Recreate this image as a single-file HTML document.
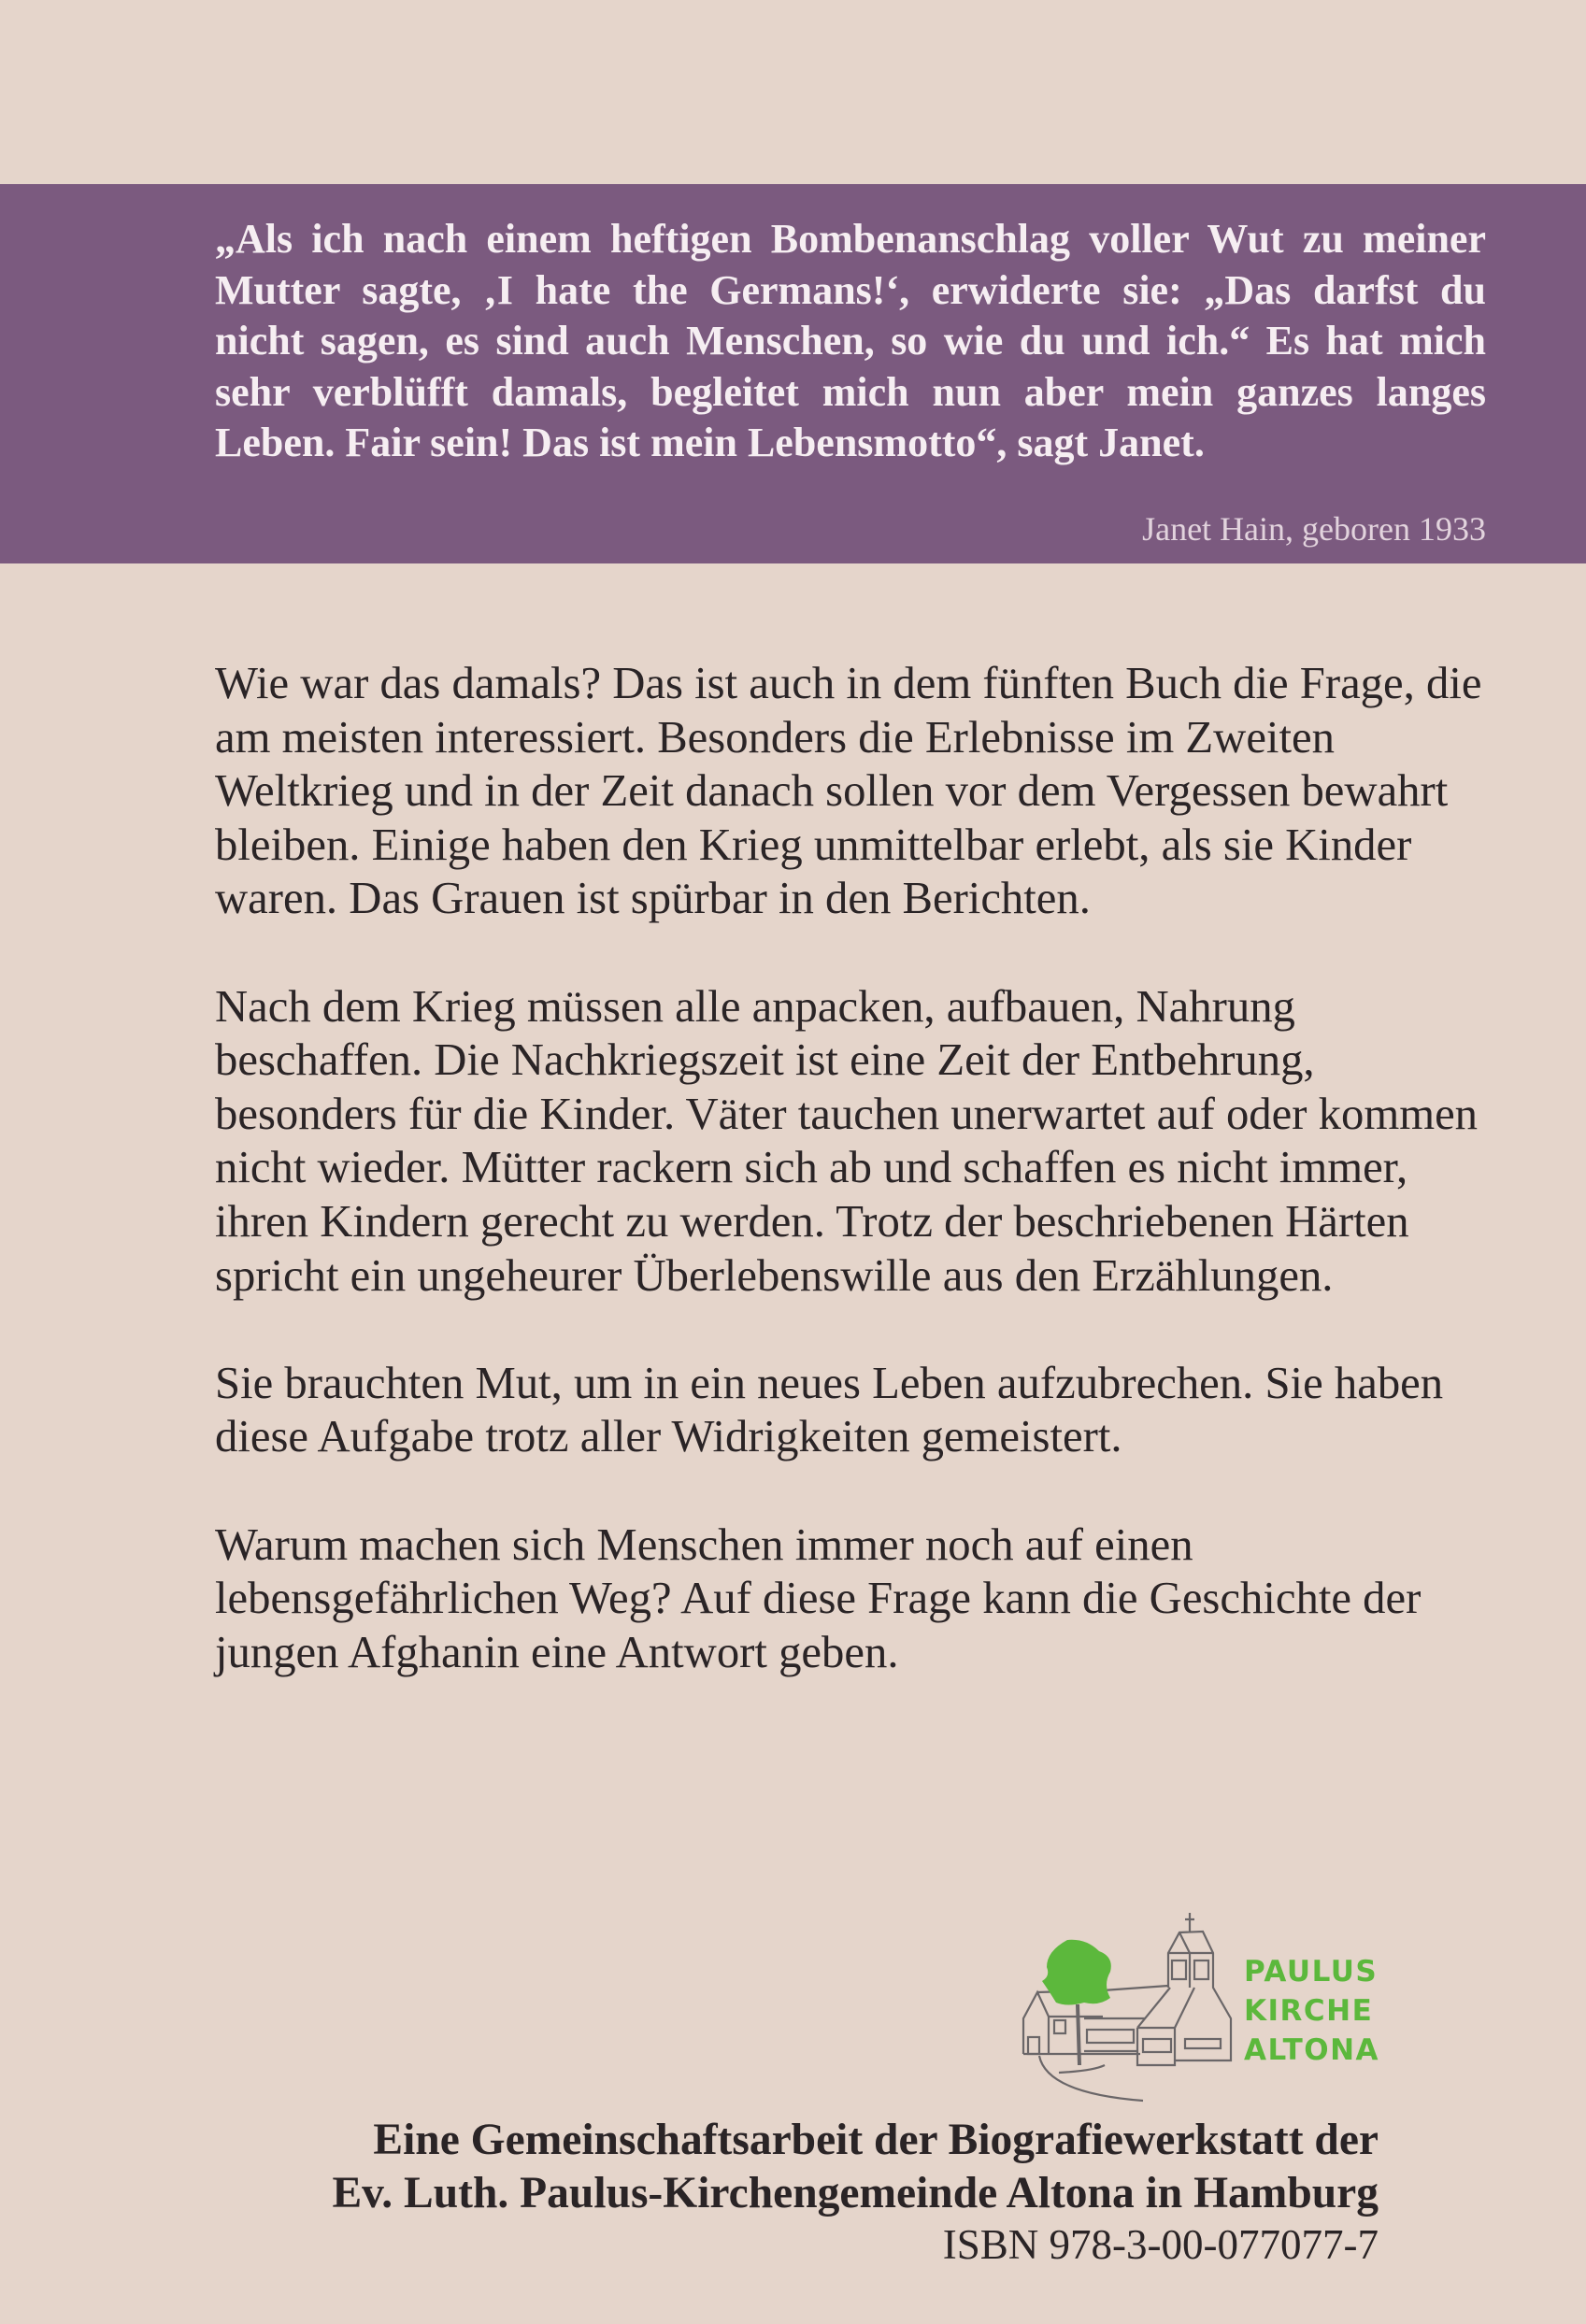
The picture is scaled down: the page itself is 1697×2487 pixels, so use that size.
<!DOCTYPE html>
<html><head><meta charset="utf-8"><style>
html,body{margin:0;padding:0}
body{width:1697px;height:2487px;background:#e5d5cb;position:relative;overflow:hidden;font-family:"Liberation Serif",serif}
.band{position:absolute;left:0;top:197px;width:1697px;height:406px;background:#7b5a7f}
.q{position:absolute;left:230px;top:229px;width:1360px;color:#f6eef2;font-weight:bold;font-size:44px;line-height:54.6px}
.q div{text-align:justify;text-align-last:justify;white-space:nowrap}
.q div.l{text-align-last:left}
.attr{position:absolute;right:107px;top:545px;color:#e2d3dd;font-size:36px}
.body{position:absolute;left:230px;top:703px;color:#2a2426;font-size:48.7px;line-height:57.6px}
.body div{white-space:nowrap}
.foot{position:absolute;right:222px;top:2262px;text-align:right;color:#2a2426;font-size:47.5px;line-height:57px}
.foot b{display:block}
.isbn{font-size:45px;line-height:52px}
</style></head><body>
<div class="band"></div>
<div class="q">
<div>„Als ich nach einem heftigen Bombenanschlag voller Wut zu meiner</div>
<div>Mutter sagte, ‚I hate the Germans!‘, erwiderte sie: „Das darfst du</div>
<div>nicht sagen, es sind auch Menschen, so wie du und ich.“ Es hat mich</div>
<div>sehr verblüfft damals, begleitet mich nun aber mein ganzes langes</div>
<div class="l">Leben. Fair sein! Das ist mein Lebensmotto“, sagt Janet.</div>
</div>
<div class="attr">Janet Hain, geboren 1933</div>
<div class="body">
<div>Wie war das damals? Das ist auch in dem fünften Buch die Frage, die</div>
<div>am meisten interessiert. Besonders die Erlebnisse im Zweiten</div>
<div>Weltkrieg und in der Zeit danach sollen vor dem Vergessen bewahrt</div>
<div>bleiben. Einige haben den Krieg unmittelbar erlebt, als sie Kinder</div>
<div>waren. Das Grauen ist spürbar in den Berichten.</div>
<div>&nbsp;</div>
<div>Nach dem Krieg müssen alle anpacken, aufbauen, Nahrung</div>
<div>beschaffen. Die Nachkriegszeit ist eine Zeit der Entbehrung,</div>
<div>besonders für die Kinder. Väter tauchen unerwartet auf oder kommen</div>
<div>nicht wieder. Mütter rackern sich ab und schaffen es nicht immer,</div>
<div>ihren Kindern gerecht zu werden. Trotz der beschriebenen Härten</div>
<div>spricht ein ungeheurer Überlebenswille aus den Erzählungen.</div>
<div>&nbsp;</div>
<div>Sie brauchten Mut, um in ein neues Leben aufzubrechen. Sie haben</div>
<div>diese Aufgabe trotz aller Widrigkeiten gemeistert.</div>
<div>&nbsp;</div>
<div>Warum machen sich Menschen immer noch auf einen</div>
<div>lebensgefährlichen Weg? Auf diese Frage kann die Geschichte der</div>
<div>jungen Afghanin eine Antwort geben.</div>
</div>
<svg style="position:absolute;left:1080px;top:2030px" width="420" height="240" viewBox="0 0 420 240">
<g fill="none" stroke="#6a6668" stroke-width="2.2">
<path d="M15 168 V130 L30 102 L42 128 V168"/>
<path d="M30 102 L100 100 M42 128 H100 M15 168 H140"/>
<path d="M100 100 L170 95 M80 130 H145 M80 165 H137"/>
<path d="M137 140 L172 97 M137 140 V180 H177 V140 H137 M177 140 L198 97"/>
<path d="M170 97 V60 L182 38 L207 37 L218 60 V97 L237 130 V175 H177"/>
<path d="M170 60 H218 M182 38 L193 60 V97"/>
<path d="M193 17 V37 M188 24 H198"/>
<path d="M32 170 Q40 210 143 218"/>
<path d="M53 188 Q90 186 102 180"/>
<rect x="174" y="68" width="15" height="20"/><rect x="198" y="68" width="15" height="20"/>
<rect x="143" y="152" width="30" height="14"/><rect x="188" y="152" width="38" height="10"/>
<rect x="83" y="142" width="50" height="14"/><rect x="48" y="132" width="12" height="14"/>
<rect x="20" y="150" width="12" height="18"/>
</g>
<path d="M73 115 L75 180" stroke="#6a6668" stroke-width="4"/>
<path d="M62 46 Q82 44 96 58 Q112 64 108 80 Q100 94 108 108 Q96 117 80 113 Q62 118 50 113 Q42 100 35 90 Q44 85 40 75 Q40 58 62 46Z" fill="#5cb83c"/>
<g fill="#5cb83c" font-family="'DejaVu Sans',sans-serif" font-size="31" font-weight="bold" letter-spacing="1.5">
<text x="251" y="90">PAULUS</text><text x="251" y="132">KIRCHE</text><text x="251" y="174">ALTONA</text>
</g>
</svg>
<div class="foot">
<b>Eine Gemeinschaftsarbeit der Biografiewerkstatt der</b>
<b>Ev. Luth. Paulus-Kirchengemeinde Altona in Hamburg</b>
<div class="isbn">ISBN 978-3-00-077077-7</div>
</div>
</body></html>
